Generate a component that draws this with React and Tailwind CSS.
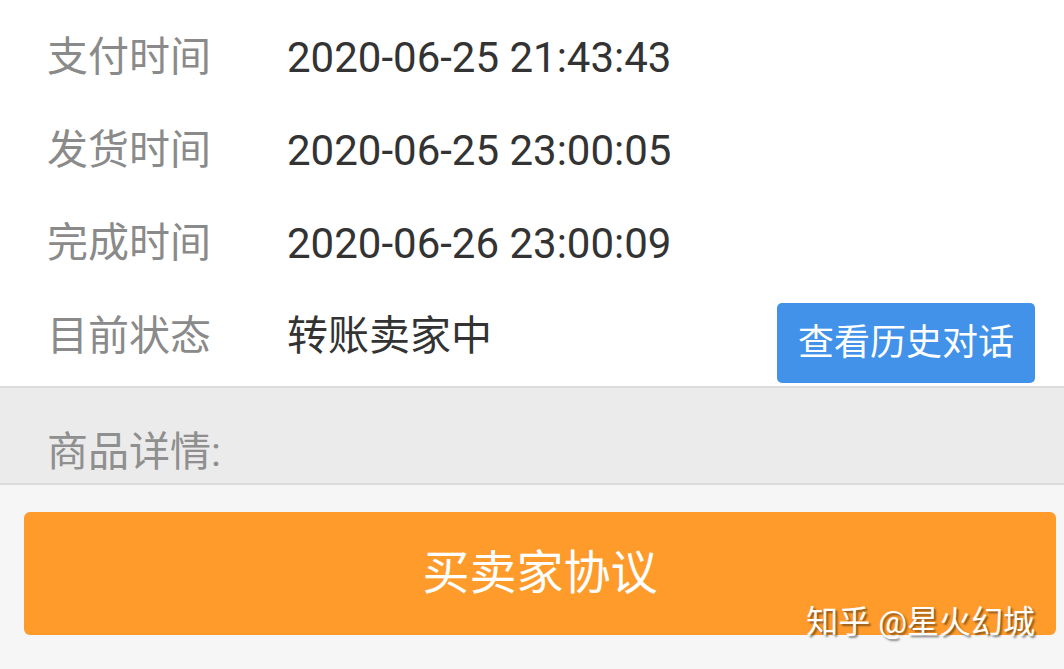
const rows = [
  { label: '支付时间', value: '2020-06-25 21:43:43' },
  { label: '发货时间', value: '2020-06-25 23:00:05' },
  { label: '完成时间', value: '2020-06-26 23:00:09' },
];

const font = { fontFamily: 'Roboto, "Noto Sans CJK SC", sans-serif' };

export default function App() {
  return (
    <div className="w-[1064px] h-[669px] overflow-hidden bg-[#f6f6f6]" style={font}>
      <div className="bg-white pl-[47px] pr-[29px] pt-[11px] h-[386px]">
        {rows.map((r) => (
          <div key={r.label} className="flex items-center h-[93px]">
            <span className="w-[240px] text-[41px] text-[#8a8a8a]">{r.label}</span>
            <span className="text-[42px] text-[#333333]">{r.value}</span>
          </div>
        ))}
        <div className="flex items-center h-[93px]">
          <span className="w-[240px] text-[41px] text-[#8a8a8a]">目前状态</span>
          <span className="text-[41px] text-[#333333]">转账卖家中</span>
          <button className="ml-auto mt-[12px] w-[258px] h-[80px] rounded-[5px] bg-[#4192e8] text-white text-[36px]">
            查看历史对话
          </button>
        </div>
      </div>
      <div className="border-y-[2px] border-[#dcdcdc] bg-[#ebebeb] h-[99px] pl-[47px] pt-[34px]">
        <span className="text-[41px] text-[#8f8f8f]">商品详情:</span>
      </div>
      <div className="pl-[24px] pr-[8px] pt-[27px]">
        <div className="relative h-[123px] rounded-[6px] bg-[#fe9b2b] flex items-center justify-center">
          <span className="text-[47px] text-white">买卖家协议</span>
          <span className="absolute right-[21px] bottom-[-11px] text-[32px] text-white [text-shadow:2px_2px_2px_rgba(0,0,0,0.45)]">
            知乎 @星火幻城
          </span>
        </div>
      </div>
    </div>
  );
}
